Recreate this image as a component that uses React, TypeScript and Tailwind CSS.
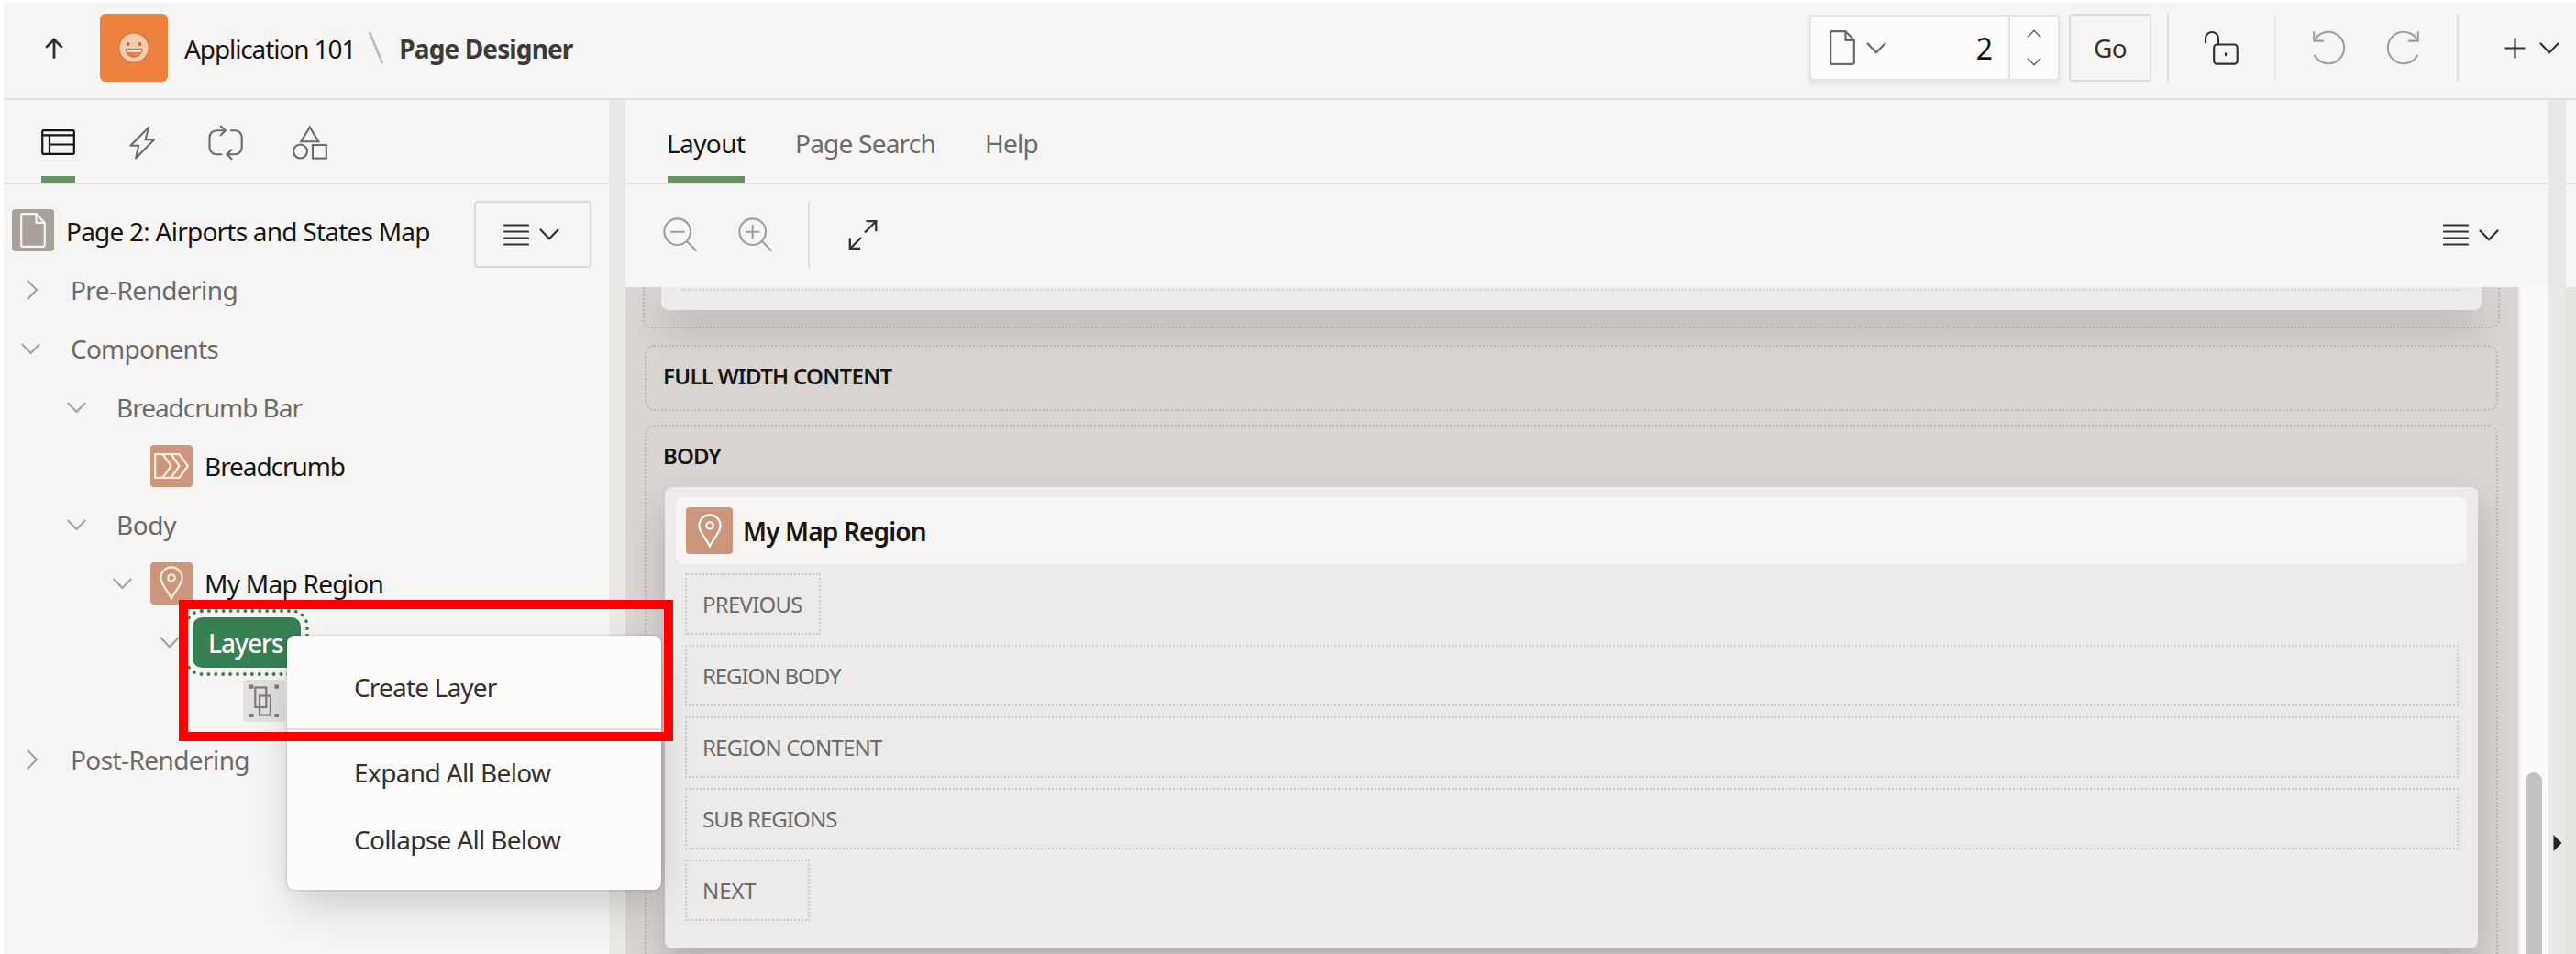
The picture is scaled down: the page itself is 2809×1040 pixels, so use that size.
import type { ReactNode } from "react";

type IconProps = { className?: string };

/* ---------- icons ---------- */

function Chevron({ className = "" }: IconProps) {
  return (
    <svg viewBox="0 0 22 13" width="22" height="13" fill="none" stroke="currentColor" strokeWidth="2.2" strokeLinecap="round" strokeLinejoin="round" className={className}>
      <path d="M1.5 1.5 11 11.3 20.5 1.5" />
    </svg>
  );
}

function ChevronRight() {
  return (
    <svg viewBox="0 0 21 22" width="21" height="22" fill="none" stroke="currentColor" strokeWidth="2.2" strokeLinecap="round" strokeLinejoin="round">
      <path d="M7.5 1.5 17 11 7.5 20.5" />
    </svg>
  );
}

function Lines() {
  return (
    <svg viewBox="0 0 28 24" width="28" height="24" stroke="currentColor" strokeWidth="2.2" strokeLinecap="round">
      <path d="M1 1.5h26M1 8.5h26M1 15.5h26M1 22.5h26" />
    </svg>
  );
}

function ArrowUp() {
  return (
    <svg viewBox="0 0 20 23" width="20" height="23" fill="none" stroke="currentColor" strokeWidth="2.8" strokeLinecap="round" strokeLinejoin="round">
      <path d="M10 21.5V2M2 10l8-8 8 8" />
    </svg>
  );
}

function Smiley() {
  return (
    <svg viewBox="0 0 34 34" width="34" height="34">
      <circle cx="17" cy="17" r="16.2" fill="#f6cbb2" stroke="#d9733a" strokeWidth="1.2" />
      <circle cx="10.8" cy="13" r="1.9" fill="#d2622a" />
      <circle cx="23.4" cy="13" r="1.9" fill="#d2622a" />
      <path d="M8.4 18.4h17.4c0 5.200-3.700 8.600-8.700 8.600s-8.700-3.400-8.700-8.600z" fill="#f0803c" stroke="#c96530" strokeWidth="1" />
      <path d="M9.200 18.900h15.800v2.700h-15.200z" fill="#fff" />
    </svg>
  );
}

function Doc({ className = "" }: IconProps) {
  return (
    <svg viewBox="0 0 28 38" width="28" height="38" fill="none" stroke="currentColor" strokeWidth="2.2" strokeLinejoin="round" className={className}>
      <path d="M2.500 1.200h15l9.300 9.500v24.800a1.300 1.300 0 0 1-1.300 1.300h-23a1.300 1.300 0 0 1-1.300-1.300v-33a1.300 1.300 0 0 1 1.300-1.300z" />
      <path d="M17.500 1.500v9.300h9.200" />
    </svg>
  );
}

function Padlock() {
  return (
    <svg viewBox="0 0 38 38" width="38" height="38" fill="none" stroke="currentColor" strokeWidth="2.2" strokeLinecap="round">
      <path d="M2 13.500V9a7 7 0 0 1 14 0v6.500" />
      <rect x="11.200" y="15.500" width="25.500" height="21.200" rx="3.200" />
      <path d="M24 24.400v3.600" strokeLinecap="butt" />
    </svg>
  );
}

function Undo({ className = "" }: IconProps) {
  return (
    <svg viewBox="0 0 38 38" width="38" height="38" fill="none" stroke="currentColor" strokeWidth="2.100" className={className}>
      <path d="M2.600 11.300A17.200 17.200 0 1 1 2.600 26.800" />
      <path d="M2.200 1.200v10.400h10.900" />
    </svg>
  );
}

function Plus() {
  return (
    <svg viewBox="0 0 23 23" width="23" height="23" stroke="currentColor" strokeWidth="2.200">
      <path d="M11.500 0.500v22M.500 11.500h22" />
    </svg>
  );
}

function LayoutIcon() {
  return (
    <svg viewBox="0 0 37 28" width="37" height="28" fill="none" stroke="currentColor" strokeWidth="2.200" strokeLinejoin="round">
      <rect x="1.200" y="1.200" width="34.600" height="25.600" rx="1.200" />
      <path d="M1.200 6.400h34.600M9 6.400v20.400M9 16.500h26.800" />
    </svg>
  );
}

function Bolt() {
  return (
    <svg viewBox="0 0 28 37" width="28" height="37" fill="none" stroke="currentColor" strokeWidth="2" strokeLinejoin="round">
      <path d="M21.400 1.500 1.400 21.700h8.800L7 35.500 27 15.300h-9.600z" />
    </svg>
  );
}

function Loop() {
  return (
    <svg viewBox="0 0 38 38" width="38" height="38" fill="none" stroke="currentColor" strokeWidth="2.100" strokeLinecap="round" strokeLinejoin="round">
      <path d="M14.500 32.300H9a7.500 7.500 0 0 1-7.500-7.500v-11A7.500 7.500 0 0 1 9 6.300h9.500" />
      <path d="M13.800 1.500l5 4.800-5 4.900" />
      <path d="M25 6.300h4.500a7.500 7.500 0 0 1 7.200 7.500v11a7.500 7.500 0 0 1-7.200 7.500H21" />
      <path d="M25.500 27.300l-5 5 5 4.900" />
    </svg>
  );
}

function Shapes() {
  return (
    <svg viewBox="0 0 38 38" width="38" height="38" fill="none" stroke="currentColor" strokeWidth="2.100">
      <path d="M18.800 2.600 28.300 18.200H9.300z" />
      <circle cx="8.500" cy="29" r="7.500" />
      <rect x="22" y="22" width="14.800" height="14.600" />
    </svg>
  );
}

function Magnifier({ plus = false }: { plus?: boolean }) {
  return (
    <svg viewBox="0 0 38 38" width="38" height="38" fill="none" stroke="currentColor" strokeWidth="2.100">
      <circle cx="15.700" cy="15.700" r="14.300" />
      <path d="M25.600 25.800 36.600 36.700M8 15.700h15.500" />
      {plus && <path d="M15.700 8v15.500" />}
    </svg>
  );
}

function Expand() {
  return (
    <svg viewBox="0 0 32 34" width="32" height="34" fill="none" stroke="currentColor" strokeWidth="2.300">
      <path d="M18 14.500 30 2.500M19.500 2.200h10.800v11M14 20 2 32M1.800 20.500v11.300h11.400" />
    </svg>
  );
}

function Pin() {
  return (
    <svg viewBox="0 0 28 40" width="26" height="38" fill="none" stroke="currentColor" strokeWidth="2.300" strokeLinejoin="round">
      <path d="M14 38C11 30 1.500 21.500 1.500 13.500a12.500 12.500 0 0 1 25 0C26.500 21.500 17 30 14 38z" />
      <circle cx="14" cy="13.500" r="4" />
    </svg>
  );
}

function Crumbs() {
  return (
    <svg viewBox="0 0 38 28" width="38" height="28" fill="none" stroke="currentColor" strokeWidth="2.200" strokeLinejoin="round">
      <path d="M1.200 1.200H27.500L36.800 14 27.500 26.800H1.200z" />
      <path d="M9.500 1.200 18.500 14 9.500 26.800M18.500 1.200 27.500 14 18.500 26.800" />
    </svg>
  );
}

function LayerIcon() {
  return (
    <svg viewBox="0 0 32 36" width="32" height="36" fill="none" stroke="#7d7c7a" strokeWidth="2.200">
      <rect x="6.300" y="3.500" width="12" height="21.500" />
      <rect x="11" y="12.500" width="12" height="21" />
      <path d="M0 2.700h4.500M27.500 2.700H32M0 34h4.500M27.500 34H32" strokeWidth="4.200" />
    </svg>
  );
}

/* ---------- building blocks ---------- */

function Divider({ className = "" }: IconProps) {
  return <span className={`h-[74px] w-[2px] shrink-0 bg-[#e2e0de] ${className}`} />;
}

function TypeIcon({ children, className = "size-[46px]" }: { children: ReactNode; className?: string }) {
  return (
    <span className={`flex shrink-0 items-center justify-center rounded-[4px] ${className}`}>{children}</span>
  );
}

const indent = ["pl-[19px]", "pl-[69px]", "pl-[119px]", "pl-[170px]", "pl-[220px]"];

function TreeRow({
  level,
  state,
  icon,
  label,
  tracking = "",
}: {
  level: number;
  state?: "open" | "closed";
  icon?: ReactNode;
  label?: string;
  tracking?: string;
}) {
  return (
    <li className={`flex h-16 items-center ${indent[level]}`}>
      <span className="flex w-[21px] justify-center text-[#a3a2a0]">
        {state === "open" && <Chevron />}
        {state === "closed" && <ChevronRight />}
      </span>
      {icon && <span className="ml-5">{icon}</span>}
      {label && (
        <span className={`${icon ? "ml-[13px] text-[#161513]" : "ml-[33px] text-[#6b6a68]"} ${tracking}`}>{label}</span>
      )}
    </li>
  );
}

function Slot({ label, size, tracking }: { label: string; size: string; tracking: string }) {
  return (
    <div className={`flex h-[67px] items-center border-2 border-dotted border-black/13 pl-[17px] text-[24px] text-[#6b6a68] ${size} ${tracking}`}>
      {label}
    </div>
  );
}

/* ---------- sections ---------- */

function Header() {
  return (
    <header className="flex h-[106px] shrink-0 items-center border-b-2 border-[#e2e1df] bg-[#f6f5f3] pb-[6px] pl-[45px] pr-[18px] text-[#33322f]">
      <ArrowUp />
      <span className="ml-10 flex size-[74px] items-center justify-center rounded-[6px] bg-[#ed813e]">
        <Smiley />
      </span>
      <span className="ml-[18px] pt-[2px] tracking-[-1.1px] text-[#161513]">Application 101</span>
      <svg viewBox="0 0 16 36" width="16" height="36" className="ml-[15px] text-[#b5b3b1]">
        <path d="M1 1 15 35" stroke="currentColor" strokeWidth="2.200" />
      </svg>
      <span className="ml-[17px] pt-[2px] font-bold tracking-[-0.89px] text-[#3b3a38]">Page Designer</span>

      <div className="ml-auto flex items-center">
        <div className="flex h-[72px] w-[273px] rounded-[4px] border-2 border-[#e6e4e2] bg-[#fdfcfb] shadow-[0_4px_6px_rgba(0,0,0,0.08)]">
          <div className="flex flex-1 items-center pl-[20px]">
            <Doc className="text-[#6b6a68]" />
            <Chevron className="ml-3 text-[#6b6a68]" />
            <span className="ml-auto mr-[17px] pt-[2px] text-[32px] text-[#161513]">2</span>
          </div>
          <div className="flex w-[54px] flex-col items-center justify-between border-l-2 border-[#e2e0de] py-[14px] text-[#6b6a68]">
            <Chevron className="h-[9px] w-4 rotate-180" />
            <Chevron className="h-[9px] w-4" />
          </div>
        </div>
        <button className="ml-[10px] h-[74px] w-[90px] rounded-[4px] border-2 border-[#dddbd9] text-center tracking-[-0.66px]">Go</button>
        <Divider className="ml-[17px]" />
        <span className="ml-[38px]"><Padlock /></span>
        <Divider className="ml-[39px] opacity-60" />
        <Undo className="ml-[39px] text-[#a09f9d]" />
        <Undo className="ml-[42px] -scale-x-100 text-[#a09f9d]" />
        <Divider className="ml-[40px]" />
        <span className="ml-[50px]"><Plus /></span>
        <Chevron className="ml-[15px]" />
      </div>
    </header>
  );
}

function LeftPane() {
  return (
    <aside className="flex w-[660px] shrink-0 flex-col bg-[#f6f5f3]">
      <nav className="flex h-[92px] border-b-2 border-[#e2e1df] pl-[41px] text-[#6b6a68]">
        <span className="flex h-[90px] w-[37px] items-center border-b-[7px] border-[#6a9164] pt-[9px] text-[#161513]">
          <LayoutIcon />
        </span>
        <span className="ml-[59px] flex items-center pt-[2px]"><Bolt /></span>
        <span className="ml-[58px] flex items-center pt-[2px]"><Loop /></span>
        <span className="ml-[54px] flex items-center pt-[2px]"><Shapes /></span>
      </nav>
      <div className="flex h-[83px] items-start pl-[9px] pr-[19px] pt-[27px]">
        <TypeIcon className="size-[46px] bg-[#a8a19a] text-[#f6f5f3]"><Doc /></TypeIcon>
        <span className="ml-[13px] h-[46px] leading-[48px] tracking-[-0.77px] text-[#161513]">Page 2: Airports and States Map</span>
        <button className="-mt-[9px] ml-auto flex h-[73px] w-[128px] items-center justify-center gap-[11px] rounded-[4px] border-2 border-[#dddbd9] pr-[3px] text-[#33322f]">
          <Lines />
          <Chevron />
        </button>
      </div>
      <ul>
        <TreeRow level={0} state="closed" label="Pre-Rendering" tracking="tracking-[-0.58px]" />
        <TreeRow level={0} state="open" label="Components" tracking="tracking-[-0.79px]" />
        <TreeRow level={1} state="open" label="Breadcrumb Bar" tracking="tracking-[-1.03px]" />
        <TreeRow level={2} icon={<TypeIcon className="size-[46px] bg-[#cb967b] text-[#fdf0dc]"><Crumbs /></TypeIcon>} label="Breadcrumb" tracking="tracking-[-1.06px]" />
        <TreeRow level={1} state="open" label="Body" tracking="tracking-[-0.41px]" />
        <TreeRow level={2} state="open" icon={<TypeIcon className="size-[46px] bg-[#cb967b] text-[#fdf0dc]"><Pin /></TypeIcon>} label="My Map Region" tracking="tracking-[-0.73px]" />
        <li className="flex h-16 items-center pl-[170px]">
          <Chevron className="text-[#a3a2a0]" />
          <span className="ml-[14px] h-[55px] w-[118px] rounded-[10px] bg-[#377f54] pl-[17px] font-medium leading-[56px] tracking-[-0.95px] text-white outline-4 outline-offset-[5px] outline-dotted outline-[#377f54]">
            Layers
          </span>
        </li>
        <TreeRow level={4} icon={<TypeIcon className="size-[46px] bg-[#e3e1de]"><LayerIcon /></TypeIcon>} />
        <TreeRow level={0} state="closed" label="Post-Rendering" tracking="tracking-[-0.59px]" />
      </ul>
    </aside>
  );
}

function Canvas() {
  return (
    <div className="flex min-h-0 flex-1">
      <div className="w-[2064px] overflow-hidden bg-[#dad5d2]">
        <div className="ml-[19px] h-[45px] w-[2025px] rounded-b-[10px] border-2 border-t-0 border-dotted border-black/13">
          <div className="ml-[18px] h-[25px] w-[1985px] rounded-b-[8px] bg-[#ecebe9] pl-[22px] pt-[2px] shadow-[0_20px_40px_rgba(0,0,0,0.19)]">
            <div className="w-[1940px] border-b-2 border-dotted border-black/10" />
          </div>
        </div>
        <section className="ml-[21px] mt-[18px] h-[72px] w-[2021px] rounded-[10px] border-2 border-dotted border-black/13 pl-[18px] pt-[16px] text-[24px] font-semibold leading-8 tracking-[-0.72px] text-[#161513]">
          FULL WIDTH CONTENT
        </section>
        <section className="ml-[21px] mt-[15px] h-[620px] w-[2021px] rounded-[10px] border-2 border-dotted border-black/13 pt-[16px]">
          <h2 className="pl-[18px] text-[24px] font-semibold leading-8 tracking-[-0.9px] text-[#161513]">BODY</h2>
          <div className="ml-5 mt-[18px] h-[503px] w-[1977px] rounded-[8px] bg-[#ecebe9] px-3 pt-[11px] shadow-[0_20px_40px_rgba(0,0,0,0.19)]">
            <div className="flex h-[73px] items-center rounded-[8px] bg-[#f6f5f3] pl-[11px]">
              <TypeIcon className="size-[51px] bg-[#cb967b] text-white"><Pin /></TypeIcon>
              <span className="ml-[11px] pt-[1px] font-semibold tracking-[-0.85px] text-[#161513]">My Map Region</span>
            </div>
            <div className="mt-[10px] flex flex-col gap-[11px] pl-[10px]">
              <Slot label="PREVIOUS" size="w-[148px]" tracking="tracking-[-0.76px]" />
              <Slot label="REGION BODY" size="w-[1934px]" tracking="tracking-[-1.08px]" />
              <Slot label="REGION CONTENT" size="w-[1934px]" tracking="tracking-[-0.84px]" />
              <Slot label="SUB REGIONS" size="w-[1934px]" tracking="tracking-[-0.92px]" />
              <Slot label="NEXT" size="w-[136px]" tracking="tracking-[-0.1px]" />
            </div>
          </div>
        </section>
      </div>
      <div className="w-[33px] overflow-hidden border-l-2 border-[#e8e8e8] bg-[#fafafa] pl-[6px] pt-[529px]">
        <div className="h-[500px] w-[18px] rounded-full bg-[#c2c2c2]" />
      </div>
    </div>
  );
}

function MainPane() {
  return (
    <main className="flex w-[2097px] shrink-0 flex-col bg-[#f6f5f3]">
      <nav className="flex h-[92px] shrink-0 border-b-2 border-[#e2e1df] pl-[46px] leading-[94px] text-[#6b6a68]">
        <span className="h-[90px] w-[84px] border-b-[7px] border-[#6a9164] tracking-[-0.6px] text-[#161513]">
          <span className="-ml-[1px]">Layout</span>
        </span>
        <span className="ml-[55px] tracking-[-0.78px]">Page Search</span>
        <span className="ml-[54px] tracking-[-0.75px]">Help</span>
      </nav>
      <div className="flex h-[112px] shrink-0 items-center pb-[2px] pl-[41px] pr-[54px] text-[#a09f9d]">
        <Magnifier />
        <span className="ml-[44px]"><Magnifier plus /></span>
        <Divider className="ml-[38px]" />
        <span className="ml-[42px] text-[#33322f]"><Expand /></span>
        <span className="ml-auto flex items-center gap-[11px] text-[#33322f]">
          <Lines />
          <Chevron />
        </span>
      </div>
      <Canvas />
    </main>
  );
}

function ContextMenu() {
  return (
    <div className="absolute left-[313px] top-[693px] h-[277px] w-[408px] rounded-[8px] bg-[#fdfcfb] text-[#33322f] shadow-[0_0_3px_rgba(0,0,0,0.25),0_20px_44px_-8px_rgba(0,0,0,0.2)]">
      <div className="h-[103px] border-b-2 border-[#e0dedc] pl-[73px] pt-[19px] leading-[74px] tracking-[-0.83px]">Create Layer</div>
      <div className="pl-[73px] pt-[10px] leading-[73px]">
        <div className="tracking-[-0.62px]">Expand All Below</div>
        <div className="tracking-[-0.69px]">Collapse All Below</div>
      </div>
    </div>
  );
}

export default function App() {
  return (
    <div className="relative flex h-[1040px] w-[2809px] flex-col overflow-hidden bg-white pl-[4px] pt-[3px] font-['Noto_Sans',sans-serif] text-[28px] leading-none">
      <Header />
      <div className="flex min-h-0 flex-1">
        <LeftPane />
        <div className="w-[18px] shrink-0 bg-[#e9e8e4]" />
        <MainPane />
        <div className="flex w-[19px] shrink-0 flex-col items-center bg-[#e9e8e4] pt-[801px]">
          <svg viewBox="0 0 10 18" width="10" height="18">
            <path d="M.500 0 9.500 9 .500 18z" fill="#262523" />
          </svg>
        </div>
        <div className="flex flex-1 flex-col bg-[#e4e3df]">
          <div className="h-[92px] border-b-2 border-[#e2e1df] bg-[#f6f5f3]" />
          <div className="h-[112px] bg-[#f6f5f3]" />
        </div>
      </div>
      <ContextMenu />
      <div className="absolute left-[195px] top-[654px] h-[154px] w-[539px] border-[10px] border-[#ff0000]" />
    </div>
  );
}
